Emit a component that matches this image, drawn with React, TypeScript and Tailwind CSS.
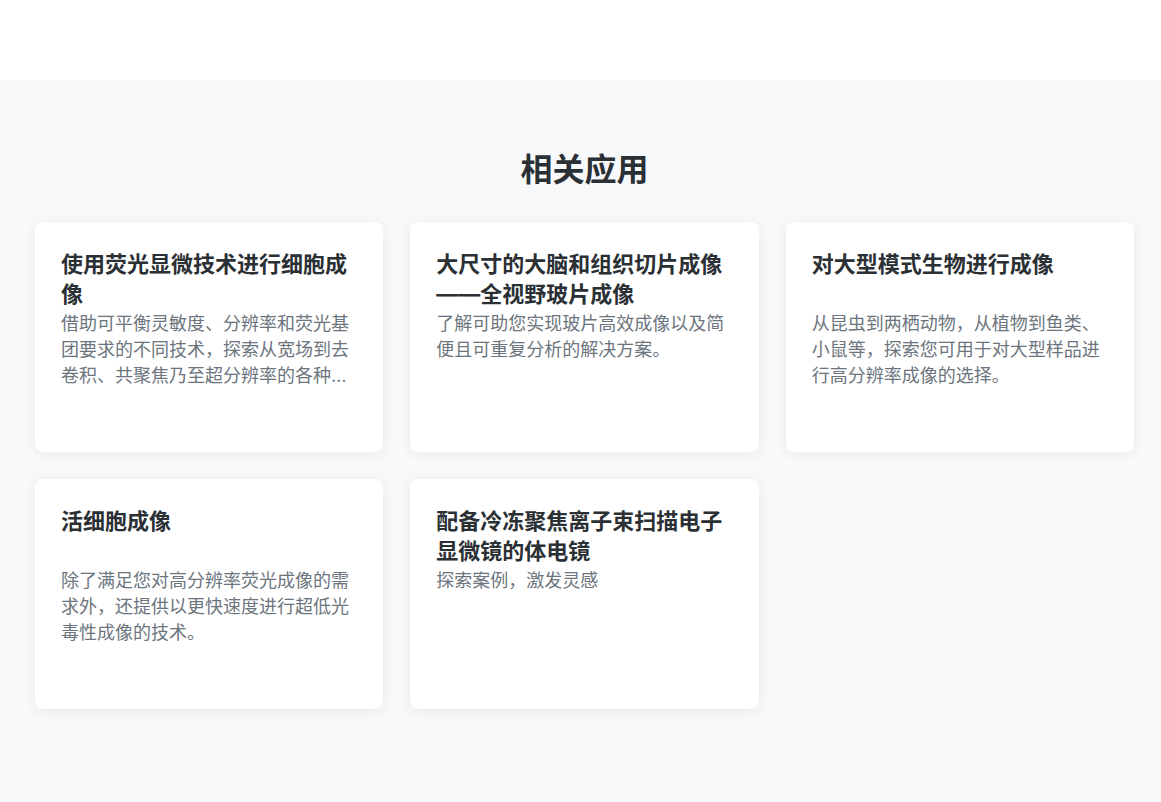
const apps = [
  {
    title: '使用荧光显微技术进行细胞成像',
    desc: '借助可平衡灵敏度、分辨率和荧光基团要求的不同技术，探索从宽场到去卷积、共聚焦乃至超分辨率的各种成像方法，满足您的研究需求。',
  },
  {
    title: '大尺寸的大脑和组织切片成像——全视野玻片成像',
    desc: '了解可助您实现玻片高效成像以及简便且可重复分析的解决方案。',
  },
  {
    title: '对大型模式生物进行成像',
    desc: '从昆虫到两栖动物，从植物到鱼类、小鼠等，探索您可用于对大型样品进行高分辨率成像的选择。',
  },
  {
    title: '活细胞成像',
    desc: '除了满足您对高分辨率荧光成像的需求外，还提供以更快速度进行超低光毒性成像的技术。',
  },
  {
    title: '配备冷冻聚焦离子束扫描电子显微镜的体电镜',
    desc: '探索案例，激发灵感',
  },
];

function AppCard({ title, desc }: { title: string; desc: string }) {
  return (
    <div className="h-[230px] rounded-lg bg-white px-[26px] pt-[27px] shadow-[0_2px_14px_rgba(0,0,0,0.07)]">
      <h3 className="min-h-[60px] text-[22px] font-bold leading-[30px] text-[#2b3035]">{title}</h3>
      <p className="mt-[2px] line-clamp-3 text-[18px] leading-[26px] text-[#6c757d]">{desc}</p>
    </div>
  );
}

export default function App() {
  return (
    <div className="min-h-[802px] bg-white font-['Inter','Noto_Sans_CJK_SC',sans-serif]">
      <div className="h-[80px] bg-white" />
      <section className="bg-[#f8f9fa] pb-[93px] pt-[70px]">
        <h2 className="ml-[35px] w-[1099px] text-center text-[32px] font-bold leading-[40px] text-[#2b3035]">
          相关应用
        </h2>
        <div className="ml-[35px] mt-[32px] grid w-[1099px] grid-cols-3 gap-[27px]">
          {apps.map((a) => (
            <AppCard key={a.title} title={a.title} desc={a.desc} />
          ))}
        </div>
      </section>
    </div>
  );
}
